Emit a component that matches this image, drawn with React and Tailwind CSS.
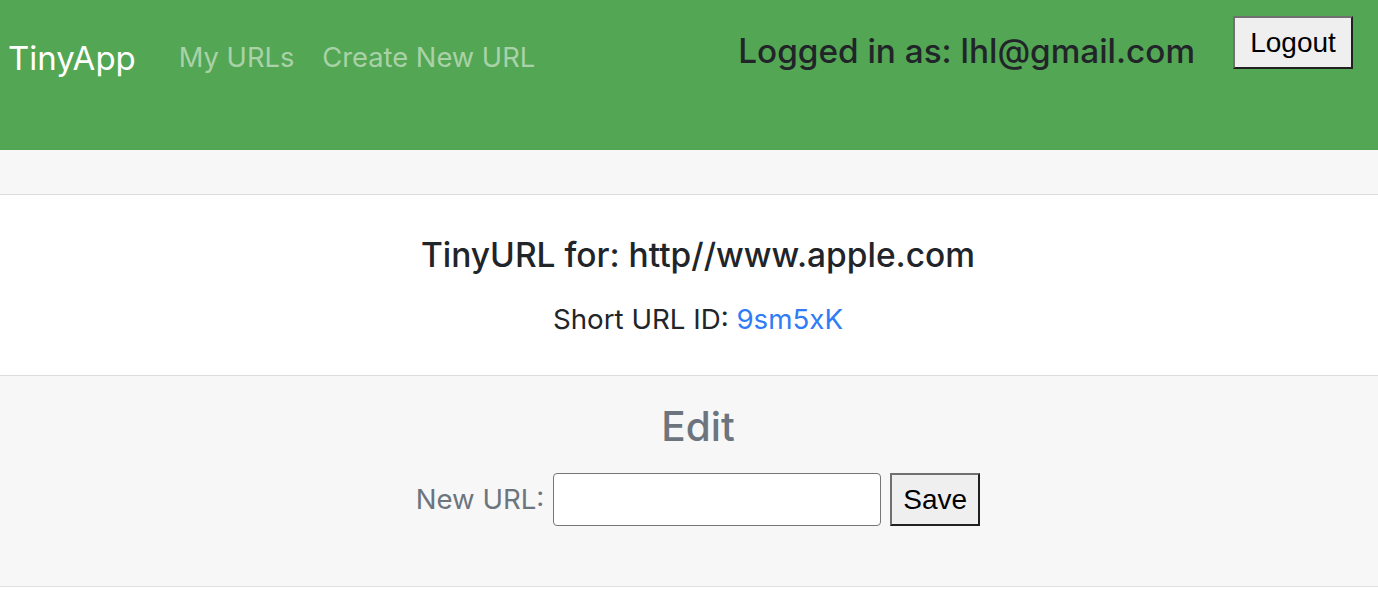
import React, { useState } from "react";

const sans = "font-['Inter','Liberation_Sans',sans-serif]";

function NavBar() {
  return (
    <nav className="flex h-[150px] items-start bg-[#53a653]">
      <a className="ml-2 mt-[36px] text-[33px] leading-[44px] text-white">TinyApp</a>
      <div className="ml-[43px] mt-[38px] flex gap-[28px] text-[27.3px] leading-[40px] text-white/50">
        <a>My URLs</a>
        <a>Create New URL</a>
      </div>
      <div className="ml-auto mr-[25px] flex items-start gap-[38px]">
        <h3 className="mt-[28px] text-[33.3px] font-medium leading-[46px] text-[#212529]">
          Logged in as: lhl@gmail.com
        </h3>
        <button className="mt-4 h-[53px] w-[120px] border-2 border-t-[#707070] border-l-[#707070] border-b-[#202020] border-r-[#202020] bg-[#efefef] font-['Liberation_Sans',sans-serif] text-[28px] text-black">
          Logout
        </button>
      </div>
    </nav>
  );
}

export default function App() {
  const [newUrl, setNewUrl] = useState("");

  return (
    <div className={`${sans} min-h-[592px] bg-white`}>
      <NavBar />
      <div className="border-b border-[#dfdfdf]">
        <div className="h-[45px] border-b border-[#dcdcdc] bg-[#f7f7f7]" />
        <div className="flex h-[180px] flex-col items-center pl-[18px] pt-[35px] text-[#212529]">
          <h5 className="text-[33.5px] font-medium leading-[50px]">
            TinyURL for: http//www.apple.com
          </h5>
          <p className="mt-[19px] text-[27.7px] leading-[40px]">
            Short URL ID: <a className="text-[#2f7cf6]">9sm5xK</a>
          </p>
        </div>
        <div className="flex h-[211px] flex-col items-center border-t border-[#dcdcdc] bg-[#f7f7f7] pl-[18px] pt-[23px]">
          <h2 className="text-[40.5px] font-medium leading-[56px] text-[#6c757d]">Edit</h2>
          <form
            className="mt-[18px] flex items-center gap-[9px]"
            onSubmit={(e) => e.preventDefault()}
          >
            <label className="text-[27.6px] text-[#6c757d]">New URL:</label>
            <input
              value={newUrl}
              onChange={(e) => setNewUrl(e.target.value)}
              className="h-[53px] w-[328px] rounded-[4px] border border-[#767676] bg-white px-2 text-[24px] outline-none"
            />
            <button className="h-[53px] w-[90px] border-2 border-t-[#707070] border-l-[#707070] border-b-[#202020] border-r-[#202020] bg-[#efefef] font-['Liberation_Sans',sans-serif] text-[28px] text-black">
              Save
            </button>
          </form>
        </div>
      </div>
    </div>
  );
}
